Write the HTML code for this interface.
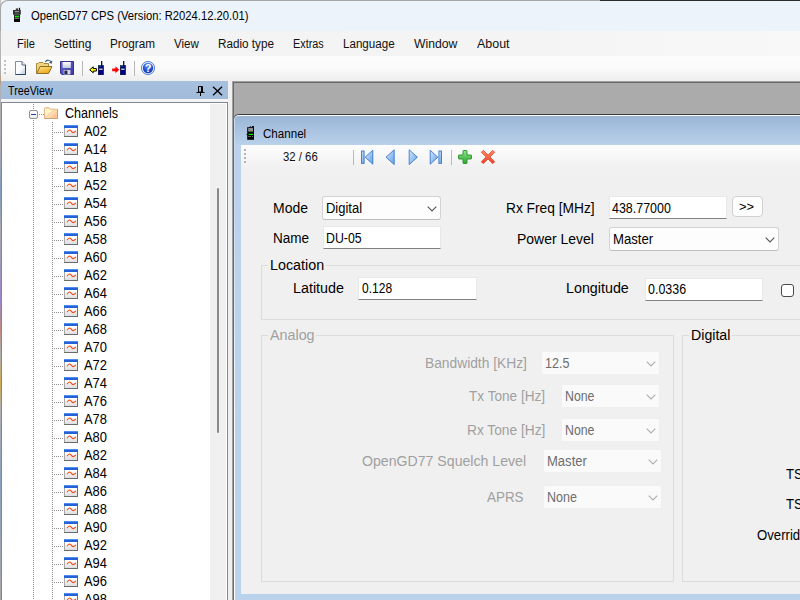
<!DOCTYPE html><html><head><meta charset="utf-8"><title>OpenGD77 CPS</title><style>
*{box-sizing:border-box;margin:0;padding:0}
html,body{width:800px;height:600px;overflow:hidden;background:#f0f0f0}
body{position:relative;font-family:"Liberation Sans",sans-serif;color:#000}
.a{position:absolute}
.t{position:absolute;white-space:nowrap;line-height:20px;height:20px;transform-origin:0 0;font-family:"Liberation Sans",sans-serif}
.tb{position:absolute;background:#fff;border:1px solid #e8e8e8;border-bottom:1px solid #828282;border-radius:1px}
.cb{position:absolute;background:#fdfdfd;border:1px solid #d2d2d2;border-bottom-color:#bdbdbd;border-radius:3px}
.cb.d{background:#fafafa;border-color:#efefef;border-radius:2px}
.gb{position:absolute;border:1px solid #dcdcdc}
.m{position:absolute;background:#f0f0f0}
</style></head><body>
<div class="a" style="left:0;top:0;width:1px;height:600px;background:linear-gradient(#c4c4c4 0,#b0b0b0 12%,#b89a78 13.5%,#b0b0b0 14.5%,#a9a9b4 25%,#7f9ac0 32%,#a9a9b0 38%,#9a86c8 50%,#c08a80 55%,#b0b0b0 59%,#d0a850 64%,#b0b0b0 68%,#8aa0c0 80%,#a8a8a8 100%)"></div>
<div class="a" style="left:0;top:0;width:800px;height:31px;background:#ecf3fa;border-top:1px solid #a6a6a6;border-left:1px solid #a6a6a6;border-top-left-radius:8px"></div>
<div class="a" style="left:600px;top:0;width:200px;height:1px;background:#2a2a2a"></div>
<svg class="a" style="left:12px;top:7px" width="10" height="16" viewBox="0 0 10 16">
<rect x="3.8" y="1.4" width="2.2" height="2" fill="#3a3a3a"/><rect x="6.8" y="0.8" width="1.3" height="2.6" fill="#111"/>
<rect x="1" y="3" width="7.8" height="4.7" fill="#303030"/><rect x="2.8" y="4.2" width="4.2" height="0.8" fill="#b4b4b4"/><rect x="2.8" y="5.8" width="4.2" height="0.8" fill="#686868"/>
<rect x="2" y="7.6" width="6" height="7.2" fill="#1c1c1c"/><rect x="2.8" y="8.7" width="4.2" height="1.5" fill="#00ee00"/>
<rect x="2.8" y="10.8" width="4.2" height="0.8" fill="#9a9a9a"/><rect x="2" y="12" width="6" height="2.8" fill="#000"/>
</svg>
<div class="a" style="left:1px;top:31px;width:799px;height:25px;background:linear-gradient(90deg,#f3f3f3,#f4f4f4 65%,#f8f8f8)"></div>
<div class="a" style="left:1px;top:56px;width:799px;height:25px;background:linear-gradient(#fcfcfc,#fafafa 50%,#eeeeee)"></div>
<div class="a" style="left:4px;top:60px;width:2px;height:15px;background:repeating-linear-gradient(#c2c2c2 0 2px,transparent 2px 4px)"></div>
<svg class="a" style="left:14px;top:60px" width="13" height="16" viewBox="0 0 13 16"><defs><linearGradient id="gn" x1="0" y1="0" x2="1" y2="1"><stop offset="0" stop-color="#fff"/><stop offset="0.55" stop-color="#fbfcff"/><stop offset="1" stop-color="#b4c2dc"/></linearGradient></defs>
<path d="M1.5 1.5 H8 L11.5 5 V14.5 H1.5 Z" fill="url(#gn)" stroke="#7c8cae" stroke-width="1"/><path d="M8 1.5 V5 H11.5" fill="#eef1f8" stroke="#54688f" stroke-width="1"/><path d="M11.5 5 V14.5 H1.5" fill="none" stroke="#2a4472" stroke-width="1"/></svg>
<svg class="a" style="left:36px;top:59px" width="17" height="16" viewBox="0 0 17 16"><defs><linearGradient id="gf" x1="0" y1="0" x2="0.6" y2="1"><stop offset="0" stop-color="#fde48a"/><stop offset="1" stop-color="#f0a818"/></linearGradient></defs>
<path d="M0.5 14.5 V4.5 H2 L3 3.5 H7 L8 4.5 H12.5 V7.5" fill="#f2d27a" stroke="#a8863a" stroke-width="1"/>
<path d="M0.8 14.5 L4 7.5 H16 L12.5 14.5 Z" fill="url(#gf)" stroke="#8a6e30" stroke-width="1"/>
<path d="M9.3 3 C10.5 0.6 14 0.4 15.4 3.4" fill="none" stroke="#3f5f8e" stroke-width="1.1"/><path d="M16.4 1.6 L15.8 4.8 L12.8 3.8 Z" fill="#3f5f8e"/></svg>
<svg class="a" style="left:60px;top:61px" width="14" height="14" viewBox="0 0 14 14"><defs><linearGradient id="gs" x1="0" y1="0" x2="1" y2="1"><stop offset="0" stop-color="#6a68d8"/><stop offset="1" stop-color="#3c3a9c"/></linearGradient><linearGradient id="gs2" x1="0" y1="0" x2="0" y2="1"><stop offset="0" stop-color="#ffffff"/><stop offset="1" stop-color="#c4c8dc"/></linearGradient></defs>
<path d="M0.5 0.5 H13.5 V13.5 H1.8 L0.5 12.2 Z" fill="url(#gs)" stroke="#34328c" stroke-width="1"/>
<rect x="2.6" y="1" width="8.2" height="6" fill="url(#gs2)"/>
<rect x="3.6" y="9" width="6.8" height="4.5" fill="#d6d8e6"/><rect x="4.4" y="9.6" width="3" height="3.6" fill="#26264a"/></svg>
<div class="a" style="left:82px;top:61px;width:1px;height:15px;background:#b9b9b9"></div>
<svg class="a" style="left:88.6px;top:66px" width="8" height="8" viewBox="0 0 8 8"><path d="M7.4 2.5 H4.2 V0.8 L0.7 3.8 L4.2 6.8 V5.1 H7.4 Z" fill="#ffff00" stroke="#000" stroke-width="1"/></svg>
<svg class="a" style="left:97.6px;top:61px" width="7" height="14" viewBox="0 0 7 14"><rect x="3.1" y="0" width="1.2" height="5" fill="#000"/><rect x="0.3" y="4.6" width="5.2" height="9.2" fill="#000084" stroke="#00002a" stroke-width="0.6"/><rect x="0.3" y="4.2" width="2.8" height="1.3" fill="#0a6e6e"/><rect x="1.2" y="7.5" width="3.4" height="1.5" fill="#c0c0c0"/></svg>
<svg class="a" style="left:111.6px;top:66px" width="8" height="8" viewBox="0 0 8 8"><path d="M0.2 2.4 H3.4 V0.3 L7.2 3.8 L3.4 7.3 V5.2 H0.2 Z" fill="#ff0000"/></svg>
<svg class="a" style="left:120.4px;top:61px" width="7" height="14" viewBox="0 0 7 14"><rect x="3.1" y="0" width="1.2" height="5" fill="#000"/><rect x="0.3" y="4.6" width="5.2" height="9.2" fill="#000084" stroke="#00002a" stroke-width="0.6"/><rect x="0.3" y="4.2" width="2.8" height="1.3" fill="#0a6e6e"/><rect x="1.2" y="7.5" width="3.4" height="1.5" fill="#c0c0c0"/></svg>
<div class="a" style="left:134px;top:61px;width:1px;height:15px;background:#b9b9b9"></div>
<svg class="a" style="left:141px;top:60.8px" width="14" height="14" viewBox="0 0 14 14"><defs><radialGradient id="gh" cx="0.5" cy="0.25" r="0.85"><stop offset="0" stop-color="#6a9af4"/><stop offset="0.6" stop-color="#1f4fd0"/><stop offset="1" stop-color="#0a2ea8"/></radialGradient></defs>
<circle cx="7" cy="7" r="6.6" fill="#e6eefc" stroke="#3a66cf" stroke-width="0.8"/><circle cx="7" cy="7" r="5.2" fill="url(#gh)"/>
<text x="7" y="10.9" text-anchor="middle" font-family="Liberation Sans, sans-serif" font-weight="bold" font-size="11" fill="#fff">?</text></svg>
<div class="a" style="left:1px;top:81px;width:227px;height:18px;background:linear-gradient(#a7c0de,#a1bbda)"></div>
<svg class="a" style="left:196px;top:85px" width="9" height="12" viewBox="0 0 9 12"><path d="M2.5 1.5 H6.5 V7 H2.5 Z M5.5 1.5 V7 M0.5 7.5 H8.5 M4.5 8 V11" fill="none" stroke="#000" stroke-width="1"/></svg>
<svg class="a" style="left:212px;top:86px" width="11" height="10" viewBox="0 0 11 10"><path d="M1 0.8 L10 9.3 M10 0.8 L1 9.3" stroke="#000" stroke-width="1.3" fill="none"/></svg>
<div class="a" style="left:1px;top:99px;width:231px;height:3px;background:#f4f4f4"></div>
<div class="a" style="left:228px;top:81px;width:4px;height:519px;background:#f0f0f0"></div>
<div class="a" style="left:1px;top:102px;width:227px;height:499px;background:#fff;border:1px solid #828790"></div>
<div class="a" style="left:210px;top:104px;width:16px;height:497px;background:#f0f0f0"></div>
<div class="a" style="left:217px;top:188px;width:2px;height:245px;background:#8a8a8a;border-radius:1px"></div>
<div class="a" style="left:33px;top:104px;width:1px;height:496px;background:repeating-linear-gradient(#909090 0 1px,transparent 1px 2px)"></div>
<div class="a" style="left:52px;top:122px;width:1px;height:478px;background:repeating-linear-gradient(#909090 0 1px,transparent 1px 2px)"></div>
<div class="a" style="left:39px;top:114px;width:6px;height:1px;background:repeating-linear-gradient(90deg,#909090 0 1px,transparent 1px 2px)"></div>
<div class="a" style="left:29px;top:110px;width:9px;height:9px;background:linear-gradient(#fff,#ececec);border:1px solid #919191;border-radius:2px"></div>
<div class="a" style="left:31px;top:114px;width:5px;height:1px;background:#2a3fa0"></div>
<svg class="a" style="left:44px;top:107px" width="14" height="12" viewBox="0 0 14 12"><defs><linearGradient id="gfo" x1="0" y1="0" x2="1" y2="1"><stop offset="0" stop-color="#fffdd4"/><stop offset="0.42" stop-color="#fff6b8"/><stop offset="0.5" stop-color="#fbc4c8"/><stop offset="0.58" stop-color="#fde9a0"/><stop offset="0.7" stop-color="#fdc8a0"/><stop offset="1" stop-color="#fbc294"/></linearGradient></defs>
<path d="M0.5 11.5 V1.6 L1.4 0.5 H5 L6 2.2 H13.5 V11.5 Z" fill="url(#gfo)" stroke="#e6b486" stroke-width="1"/><path d="M13.5 2.5 V11.5 H0.5" fill="none" stroke="#c9a27a" stroke-width="1"/><path d="M1 1.2 H5" stroke="#fdd4a4" stroke-width="1.4"/></svg>
<svg class="a" width="0" height="0"><defs><linearGradient id="gi" x1="0" y1="0" x2="0" y2="1"><stop offset="0.3" stop-color="#ffffff"/><stop offset="1" stop-color="#dcdcdc"/></linearGradient></defs></svg>
<div class="a" style="left:54px;top:132px;width:10px;height:1px;background:repeating-linear-gradient(90deg,#909090 0 1px,transparent 1px 2px)"></div>
<svg class="a" style="left:64px;top:125px" width="14" height="12" viewBox="0 0 14 12"><rect x="0.5" y="0.5" width="13" height="11" fill="url(#gi)" stroke="#a8a8a8" stroke-width="1"/><path d="M13.5 3 V11.5 M0 11.5 H14" fill="none" stroke="#6c6c6c" stroke-width="1"/><rect x="0" y="0" width="14" height="3" fill="#2463d6"/><rect x="0" y="0" width="14" height="1" fill="#4c8ef4"/><path d="M3 7.3 C4 5.6 5 4.6 6.2 5.2 S8 8 9.4 7.7 S11 6.4 12 6" fill="none" stroke="#f04a1a" stroke-width="1.1"/></svg>
<div class="a" style="left:54px;top:150px;width:10px;height:1px;background:repeating-linear-gradient(90deg,#909090 0 1px,transparent 1px 2px)"></div>
<svg class="a" style="left:64px;top:143px" width="14" height="12" viewBox="0 0 14 12"><rect x="0.5" y="0.5" width="13" height="11" fill="url(#gi)" stroke="#a8a8a8" stroke-width="1"/><path d="M13.5 3 V11.5 M0 11.5 H14" fill="none" stroke="#6c6c6c" stroke-width="1"/><rect x="0" y="0" width="14" height="3" fill="#2463d6"/><rect x="0" y="0" width="14" height="1" fill="#4c8ef4"/><path d="M3 7.3 C4 5.6 5 4.6 6.2 5.2 S8 8 9.4 7.7 S11 6.4 12 6" fill="none" stroke="#f04a1a" stroke-width="1.1"/></svg>
<div class="a" style="left:54px;top:168px;width:10px;height:1px;background:repeating-linear-gradient(90deg,#909090 0 1px,transparent 1px 2px)"></div>
<svg class="a" style="left:64px;top:161px" width="14" height="12" viewBox="0 0 14 12"><rect x="0.5" y="0.5" width="13" height="11" fill="url(#gi)" stroke="#a8a8a8" stroke-width="1"/><path d="M13.5 3 V11.5 M0 11.5 H14" fill="none" stroke="#6c6c6c" stroke-width="1"/><rect x="0" y="0" width="14" height="3" fill="#2463d6"/><rect x="0" y="0" width="14" height="1" fill="#4c8ef4"/><path d="M3 7.3 C4 5.6 5 4.6 6.2 5.2 S8 8 9.4 7.7 S11 6.4 12 6" fill="none" stroke="#f04a1a" stroke-width="1.1"/></svg>
<div class="a" style="left:54px;top:186px;width:10px;height:1px;background:repeating-linear-gradient(90deg,#909090 0 1px,transparent 1px 2px)"></div>
<svg class="a" style="left:64px;top:179px" width="14" height="12" viewBox="0 0 14 12"><rect x="0.5" y="0.5" width="13" height="11" fill="url(#gi)" stroke="#a8a8a8" stroke-width="1"/><path d="M13.5 3 V11.5 M0 11.5 H14" fill="none" stroke="#6c6c6c" stroke-width="1"/><rect x="0" y="0" width="14" height="3" fill="#2463d6"/><rect x="0" y="0" width="14" height="1" fill="#4c8ef4"/><path d="M3 7.3 C4 5.6 5 4.6 6.2 5.2 S8 8 9.4 7.7 S11 6.4 12 6" fill="none" stroke="#f04a1a" stroke-width="1.1"/></svg>
<div class="a" style="left:54px;top:204px;width:10px;height:1px;background:repeating-linear-gradient(90deg,#909090 0 1px,transparent 1px 2px)"></div>
<svg class="a" style="left:64px;top:197px" width="14" height="12" viewBox="0 0 14 12"><rect x="0.5" y="0.5" width="13" height="11" fill="url(#gi)" stroke="#a8a8a8" stroke-width="1"/><path d="M13.5 3 V11.5 M0 11.5 H14" fill="none" stroke="#6c6c6c" stroke-width="1"/><rect x="0" y="0" width="14" height="3" fill="#2463d6"/><rect x="0" y="0" width="14" height="1" fill="#4c8ef4"/><path d="M3 7.3 C4 5.6 5 4.6 6.2 5.2 S8 8 9.4 7.7 S11 6.4 12 6" fill="none" stroke="#f04a1a" stroke-width="1.1"/></svg>
<div class="a" style="left:54px;top:222px;width:10px;height:1px;background:repeating-linear-gradient(90deg,#909090 0 1px,transparent 1px 2px)"></div>
<svg class="a" style="left:64px;top:215px" width="14" height="12" viewBox="0 0 14 12"><rect x="0.5" y="0.5" width="13" height="11" fill="url(#gi)" stroke="#a8a8a8" stroke-width="1"/><path d="M13.5 3 V11.5 M0 11.5 H14" fill="none" stroke="#6c6c6c" stroke-width="1"/><rect x="0" y="0" width="14" height="3" fill="#2463d6"/><rect x="0" y="0" width="14" height="1" fill="#4c8ef4"/><path d="M3 7.3 C4 5.6 5 4.6 6.2 5.2 S8 8 9.4 7.7 S11 6.4 12 6" fill="none" stroke="#f04a1a" stroke-width="1.1"/></svg>
<div class="a" style="left:54px;top:240px;width:10px;height:1px;background:repeating-linear-gradient(90deg,#909090 0 1px,transparent 1px 2px)"></div>
<svg class="a" style="left:64px;top:233px" width="14" height="12" viewBox="0 0 14 12"><rect x="0.5" y="0.5" width="13" height="11" fill="url(#gi)" stroke="#a8a8a8" stroke-width="1"/><path d="M13.5 3 V11.5 M0 11.5 H14" fill="none" stroke="#6c6c6c" stroke-width="1"/><rect x="0" y="0" width="14" height="3" fill="#2463d6"/><rect x="0" y="0" width="14" height="1" fill="#4c8ef4"/><path d="M3 7.3 C4 5.6 5 4.6 6.2 5.2 S8 8 9.4 7.7 S11 6.4 12 6" fill="none" stroke="#f04a1a" stroke-width="1.1"/></svg>
<div class="a" style="left:54px;top:258px;width:10px;height:1px;background:repeating-linear-gradient(90deg,#909090 0 1px,transparent 1px 2px)"></div>
<svg class="a" style="left:64px;top:251px" width="14" height="12" viewBox="0 0 14 12"><rect x="0.5" y="0.5" width="13" height="11" fill="url(#gi)" stroke="#a8a8a8" stroke-width="1"/><path d="M13.5 3 V11.5 M0 11.5 H14" fill="none" stroke="#6c6c6c" stroke-width="1"/><rect x="0" y="0" width="14" height="3" fill="#2463d6"/><rect x="0" y="0" width="14" height="1" fill="#4c8ef4"/><path d="M3 7.3 C4 5.6 5 4.6 6.2 5.2 S8 8 9.4 7.7 S11 6.4 12 6" fill="none" stroke="#f04a1a" stroke-width="1.1"/></svg>
<div class="a" style="left:54px;top:276px;width:10px;height:1px;background:repeating-linear-gradient(90deg,#909090 0 1px,transparent 1px 2px)"></div>
<svg class="a" style="left:64px;top:269px" width="14" height="12" viewBox="0 0 14 12"><rect x="0.5" y="0.5" width="13" height="11" fill="url(#gi)" stroke="#a8a8a8" stroke-width="1"/><path d="M13.5 3 V11.5 M0 11.5 H14" fill="none" stroke="#6c6c6c" stroke-width="1"/><rect x="0" y="0" width="14" height="3" fill="#2463d6"/><rect x="0" y="0" width="14" height="1" fill="#4c8ef4"/><path d="M3 7.3 C4 5.6 5 4.6 6.2 5.2 S8 8 9.4 7.7 S11 6.4 12 6" fill="none" stroke="#f04a1a" stroke-width="1.1"/></svg>
<div class="a" style="left:54px;top:294px;width:10px;height:1px;background:repeating-linear-gradient(90deg,#909090 0 1px,transparent 1px 2px)"></div>
<svg class="a" style="left:64px;top:287px" width="14" height="12" viewBox="0 0 14 12"><rect x="0.5" y="0.5" width="13" height="11" fill="url(#gi)" stroke="#a8a8a8" stroke-width="1"/><path d="M13.5 3 V11.5 M0 11.5 H14" fill="none" stroke="#6c6c6c" stroke-width="1"/><rect x="0" y="0" width="14" height="3" fill="#2463d6"/><rect x="0" y="0" width="14" height="1" fill="#4c8ef4"/><path d="M3 7.3 C4 5.6 5 4.6 6.2 5.2 S8 8 9.4 7.7 S11 6.4 12 6" fill="none" stroke="#f04a1a" stroke-width="1.1"/></svg>
<div class="a" style="left:54px;top:312px;width:10px;height:1px;background:repeating-linear-gradient(90deg,#909090 0 1px,transparent 1px 2px)"></div>
<svg class="a" style="left:64px;top:305px" width="14" height="12" viewBox="0 0 14 12"><rect x="0.5" y="0.5" width="13" height="11" fill="url(#gi)" stroke="#a8a8a8" stroke-width="1"/><path d="M13.5 3 V11.5 M0 11.5 H14" fill="none" stroke="#6c6c6c" stroke-width="1"/><rect x="0" y="0" width="14" height="3" fill="#2463d6"/><rect x="0" y="0" width="14" height="1" fill="#4c8ef4"/><path d="M3 7.3 C4 5.6 5 4.6 6.2 5.2 S8 8 9.4 7.7 S11 6.4 12 6" fill="none" stroke="#f04a1a" stroke-width="1.1"/></svg>
<div class="a" style="left:54px;top:330px;width:10px;height:1px;background:repeating-linear-gradient(90deg,#909090 0 1px,transparent 1px 2px)"></div>
<svg class="a" style="left:64px;top:323px" width="14" height="12" viewBox="0 0 14 12"><rect x="0.5" y="0.5" width="13" height="11" fill="url(#gi)" stroke="#a8a8a8" stroke-width="1"/><path d="M13.5 3 V11.5 M0 11.5 H14" fill="none" stroke="#6c6c6c" stroke-width="1"/><rect x="0" y="0" width="14" height="3" fill="#2463d6"/><rect x="0" y="0" width="14" height="1" fill="#4c8ef4"/><path d="M3 7.3 C4 5.6 5 4.6 6.2 5.2 S8 8 9.4 7.7 S11 6.4 12 6" fill="none" stroke="#f04a1a" stroke-width="1.1"/></svg>
<div class="a" style="left:54px;top:348px;width:10px;height:1px;background:repeating-linear-gradient(90deg,#909090 0 1px,transparent 1px 2px)"></div>
<svg class="a" style="left:64px;top:341px" width="14" height="12" viewBox="0 0 14 12"><rect x="0.5" y="0.5" width="13" height="11" fill="url(#gi)" stroke="#a8a8a8" stroke-width="1"/><path d="M13.5 3 V11.5 M0 11.5 H14" fill="none" stroke="#6c6c6c" stroke-width="1"/><rect x="0" y="0" width="14" height="3" fill="#2463d6"/><rect x="0" y="0" width="14" height="1" fill="#4c8ef4"/><path d="M3 7.3 C4 5.6 5 4.6 6.2 5.2 S8 8 9.4 7.7 S11 6.4 12 6" fill="none" stroke="#f04a1a" stroke-width="1.1"/></svg>
<div class="a" style="left:54px;top:366px;width:10px;height:1px;background:repeating-linear-gradient(90deg,#909090 0 1px,transparent 1px 2px)"></div>
<svg class="a" style="left:64px;top:359px" width="14" height="12" viewBox="0 0 14 12"><rect x="0.5" y="0.5" width="13" height="11" fill="url(#gi)" stroke="#a8a8a8" stroke-width="1"/><path d="M13.5 3 V11.5 M0 11.5 H14" fill="none" stroke="#6c6c6c" stroke-width="1"/><rect x="0" y="0" width="14" height="3" fill="#2463d6"/><rect x="0" y="0" width="14" height="1" fill="#4c8ef4"/><path d="M3 7.3 C4 5.6 5 4.6 6.2 5.2 S8 8 9.4 7.7 S11 6.4 12 6" fill="none" stroke="#f04a1a" stroke-width="1.1"/></svg>
<div class="a" style="left:54px;top:384px;width:10px;height:1px;background:repeating-linear-gradient(90deg,#909090 0 1px,transparent 1px 2px)"></div>
<svg class="a" style="left:64px;top:377px" width="14" height="12" viewBox="0 0 14 12"><rect x="0.5" y="0.5" width="13" height="11" fill="url(#gi)" stroke="#a8a8a8" stroke-width="1"/><path d="M13.5 3 V11.5 M0 11.5 H14" fill="none" stroke="#6c6c6c" stroke-width="1"/><rect x="0" y="0" width="14" height="3" fill="#2463d6"/><rect x="0" y="0" width="14" height="1" fill="#4c8ef4"/><path d="M3 7.3 C4 5.6 5 4.6 6.2 5.2 S8 8 9.4 7.7 S11 6.4 12 6" fill="none" stroke="#f04a1a" stroke-width="1.1"/></svg>
<div class="a" style="left:54px;top:402px;width:10px;height:1px;background:repeating-linear-gradient(90deg,#909090 0 1px,transparent 1px 2px)"></div>
<svg class="a" style="left:64px;top:395px" width="14" height="12" viewBox="0 0 14 12"><rect x="0.5" y="0.5" width="13" height="11" fill="url(#gi)" stroke="#a8a8a8" stroke-width="1"/><path d="M13.5 3 V11.5 M0 11.5 H14" fill="none" stroke="#6c6c6c" stroke-width="1"/><rect x="0" y="0" width="14" height="3" fill="#2463d6"/><rect x="0" y="0" width="14" height="1" fill="#4c8ef4"/><path d="M3 7.3 C4 5.6 5 4.6 6.2 5.2 S8 8 9.4 7.7 S11 6.4 12 6" fill="none" stroke="#f04a1a" stroke-width="1.1"/></svg>
<div class="a" style="left:54px;top:420px;width:10px;height:1px;background:repeating-linear-gradient(90deg,#909090 0 1px,transparent 1px 2px)"></div>
<svg class="a" style="left:64px;top:413px" width="14" height="12" viewBox="0 0 14 12"><rect x="0.5" y="0.5" width="13" height="11" fill="url(#gi)" stroke="#a8a8a8" stroke-width="1"/><path d="M13.5 3 V11.5 M0 11.5 H14" fill="none" stroke="#6c6c6c" stroke-width="1"/><rect x="0" y="0" width="14" height="3" fill="#2463d6"/><rect x="0" y="0" width="14" height="1" fill="#4c8ef4"/><path d="M3 7.3 C4 5.6 5 4.6 6.2 5.2 S8 8 9.4 7.7 S11 6.4 12 6" fill="none" stroke="#f04a1a" stroke-width="1.1"/></svg>
<div class="a" style="left:54px;top:438px;width:10px;height:1px;background:repeating-linear-gradient(90deg,#909090 0 1px,transparent 1px 2px)"></div>
<svg class="a" style="left:64px;top:431px" width="14" height="12" viewBox="0 0 14 12"><rect x="0.5" y="0.5" width="13" height="11" fill="url(#gi)" stroke="#a8a8a8" stroke-width="1"/><path d="M13.5 3 V11.5 M0 11.5 H14" fill="none" stroke="#6c6c6c" stroke-width="1"/><rect x="0" y="0" width="14" height="3" fill="#2463d6"/><rect x="0" y="0" width="14" height="1" fill="#4c8ef4"/><path d="M3 7.3 C4 5.6 5 4.6 6.2 5.2 S8 8 9.4 7.7 S11 6.4 12 6" fill="none" stroke="#f04a1a" stroke-width="1.1"/></svg>
<div class="a" style="left:54px;top:456px;width:10px;height:1px;background:repeating-linear-gradient(90deg,#909090 0 1px,transparent 1px 2px)"></div>
<svg class="a" style="left:64px;top:449px" width="14" height="12" viewBox="0 0 14 12"><rect x="0.5" y="0.5" width="13" height="11" fill="url(#gi)" stroke="#a8a8a8" stroke-width="1"/><path d="M13.5 3 V11.5 M0 11.5 H14" fill="none" stroke="#6c6c6c" stroke-width="1"/><rect x="0" y="0" width="14" height="3" fill="#2463d6"/><rect x="0" y="0" width="14" height="1" fill="#4c8ef4"/><path d="M3 7.3 C4 5.6 5 4.6 6.2 5.2 S8 8 9.4 7.7 S11 6.4 12 6" fill="none" stroke="#f04a1a" stroke-width="1.1"/></svg>
<div class="a" style="left:54px;top:474px;width:10px;height:1px;background:repeating-linear-gradient(90deg,#909090 0 1px,transparent 1px 2px)"></div>
<svg class="a" style="left:64px;top:467px" width="14" height="12" viewBox="0 0 14 12"><rect x="0.5" y="0.5" width="13" height="11" fill="url(#gi)" stroke="#a8a8a8" stroke-width="1"/><path d="M13.5 3 V11.5 M0 11.5 H14" fill="none" stroke="#6c6c6c" stroke-width="1"/><rect x="0" y="0" width="14" height="3" fill="#2463d6"/><rect x="0" y="0" width="14" height="1" fill="#4c8ef4"/><path d="M3 7.3 C4 5.6 5 4.6 6.2 5.2 S8 8 9.4 7.7 S11 6.4 12 6" fill="none" stroke="#f04a1a" stroke-width="1.1"/></svg>
<div class="a" style="left:54px;top:492px;width:10px;height:1px;background:repeating-linear-gradient(90deg,#909090 0 1px,transparent 1px 2px)"></div>
<svg class="a" style="left:64px;top:485px" width="14" height="12" viewBox="0 0 14 12"><rect x="0.5" y="0.5" width="13" height="11" fill="url(#gi)" stroke="#a8a8a8" stroke-width="1"/><path d="M13.5 3 V11.5 M0 11.5 H14" fill="none" stroke="#6c6c6c" stroke-width="1"/><rect x="0" y="0" width="14" height="3" fill="#2463d6"/><rect x="0" y="0" width="14" height="1" fill="#4c8ef4"/><path d="M3 7.3 C4 5.6 5 4.6 6.2 5.2 S8 8 9.4 7.7 S11 6.4 12 6" fill="none" stroke="#f04a1a" stroke-width="1.1"/></svg>
<div class="a" style="left:54px;top:510px;width:10px;height:1px;background:repeating-linear-gradient(90deg,#909090 0 1px,transparent 1px 2px)"></div>
<svg class="a" style="left:64px;top:503px" width="14" height="12" viewBox="0 0 14 12"><rect x="0.5" y="0.5" width="13" height="11" fill="url(#gi)" stroke="#a8a8a8" stroke-width="1"/><path d="M13.5 3 V11.5 M0 11.5 H14" fill="none" stroke="#6c6c6c" stroke-width="1"/><rect x="0" y="0" width="14" height="3" fill="#2463d6"/><rect x="0" y="0" width="14" height="1" fill="#4c8ef4"/><path d="M3 7.3 C4 5.6 5 4.6 6.2 5.2 S8 8 9.4 7.7 S11 6.4 12 6" fill="none" stroke="#f04a1a" stroke-width="1.1"/></svg>
<div class="a" style="left:54px;top:528px;width:10px;height:1px;background:repeating-linear-gradient(90deg,#909090 0 1px,transparent 1px 2px)"></div>
<svg class="a" style="left:64px;top:521px" width="14" height="12" viewBox="0 0 14 12"><rect x="0.5" y="0.5" width="13" height="11" fill="url(#gi)" stroke="#a8a8a8" stroke-width="1"/><path d="M13.5 3 V11.5 M0 11.5 H14" fill="none" stroke="#6c6c6c" stroke-width="1"/><rect x="0" y="0" width="14" height="3" fill="#2463d6"/><rect x="0" y="0" width="14" height="1" fill="#4c8ef4"/><path d="M3 7.3 C4 5.6 5 4.6 6.2 5.2 S8 8 9.4 7.7 S11 6.4 12 6" fill="none" stroke="#f04a1a" stroke-width="1.1"/></svg>
<div class="a" style="left:54px;top:546px;width:10px;height:1px;background:repeating-linear-gradient(90deg,#909090 0 1px,transparent 1px 2px)"></div>
<svg class="a" style="left:64px;top:539px" width="14" height="12" viewBox="0 0 14 12"><rect x="0.5" y="0.5" width="13" height="11" fill="url(#gi)" stroke="#a8a8a8" stroke-width="1"/><path d="M13.5 3 V11.5 M0 11.5 H14" fill="none" stroke="#6c6c6c" stroke-width="1"/><rect x="0" y="0" width="14" height="3" fill="#2463d6"/><rect x="0" y="0" width="14" height="1" fill="#4c8ef4"/><path d="M3 7.3 C4 5.6 5 4.6 6.2 5.2 S8 8 9.4 7.7 S11 6.4 12 6" fill="none" stroke="#f04a1a" stroke-width="1.1"/></svg>
<div class="a" style="left:54px;top:564px;width:10px;height:1px;background:repeating-linear-gradient(90deg,#909090 0 1px,transparent 1px 2px)"></div>
<svg class="a" style="left:64px;top:557px" width="14" height="12" viewBox="0 0 14 12"><rect x="0.5" y="0.5" width="13" height="11" fill="url(#gi)" stroke="#a8a8a8" stroke-width="1"/><path d="M13.5 3 V11.5 M0 11.5 H14" fill="none" stroke="#6c6c6c" stroke-width="1"/><rect x="0" y="0" width="14" height="3" fill="#2463d6"/><rect x="0" y="0" width="14" height="1" fill="#4c8ef4"/><path d="M3 7.3 C4 5.6 5 4.6 6.2 5.2 S8 8 9.4 7.7 S11 6.4 12 6" fill="none" stroke="#f04a1a" stroke-width="1.1"/></svg>
<div class="a" style="left:54px;top:582px;width:10px;height:1px;background:repeating-linear-gradient(90deg,#909090 0 1px,transparent 1px 2px)"></div>
<svg class="a" style="left:64px;top:575px" width="14" height="12" viewBox="0 0 14 12"><rect x="0.5" y="0.5" width="13" height="11" fill="url(#gi)" stroke="#a8a8a8" stroke-width="1"/><path d="M13.5 3 V11.5 M0 11.5 H14" fill="none" stroke="#6c6c6c" stroke-width="1"/><rect x="0" y="0" width="14" height="3" fill="#2463d6"/><rect x="0" y="0" width="14" height="1" fill="#4c8ef4"/><path d="M3 7.3 C4 5.6 5 4.6 6.2 5.2 S8 8 9.4 7.7 S11 6.4 12 6" fill="none" stroke="#f04a1a" stroke-width="1.1"/></svg>
<div class="a" style="left:54px;top:600px;width:10px;height:1px;background:repeating-linear-gradient(90deg,#909090 0 1px,transparent 1px 2px)"></div>
<svg class="a" style="left:64px;top:593px" width="14" height="12" viewBox="0 0 14 12"><rect x="0.5" y="0.5" width="13" height="11" fill="url(#gi)" stroke="#a8a8a8" stroke-width="1"/><path d="M13.5 3 V11.5 M0 11.5 H14" fill="none" stroke="#6c6c6c" stroke-width="1"/><rect x="0" y="0" width="14" height="3" fill="#2463d6"/><rect x="0" y="0" width="14" height="1" fill="#4c8ef4"/><path d="M3 7.3 C4 5.6 5 4.6 6.2 5.2 S8 8 9.4 7.7 S11 6.4 12 6" fill="none" stroke="#f04a1a" stroke-width="1.1"/></svg>
<div class="a" style="left:232px;top:81px;width:568px;height:519px;background:#a0a0a0"></div>
<div class="a" style="left:233px;top:82px;width:567px;height:518px;background:#696969"></div>
<div class="a" style="left:234px;top:83px;width:566px;height:517px;background:#ababab"></div>
<div class="a" style="left:233px;top:114px;width:580px;height:500px;background:#bad2eb;border:1px solid #696969;border-top-color:#3c3c3c;border-top-left-radius:6px"></div>
<div class="a" style="left:234px;top:115px;width:580px;height:500px;border-top:1px solid #f4f8fc;border-left:1px solid #c4d8ee;border-top-left-radius:5px"></div>
<div class="a" style="left:234px;top:180px;width:1px;height:420px;background:linear-gradient(rgba(255,255,255,0),rgba(255,255,255,0.95) 60%,#fff)"></div>
<div class="a" style="left:235px;top:116px;width:580px;height:29px;background:linear-gradient(#9ab5d6,#b9d1ea);border-top-left-radius:4px"></div>
<svg class="a" style="left:246px;top:126px" width="9" height="14" viewBox="0 0 9 14">
<rect x="1.2" y="1.2" width="6.8" height="12.6" fill="#000"/><path d="M3.4 1.3 L4.3 0 L5.2 1.3 Z" fill="#000"/><rect x="5.8" y="0.1" width="2.2" height="1.4" fill="#000"/>
<rect x="2.2" y="2" width="4.8" height="3.6" fill="#8e8e8e"/><rect x="0.5" y="8" width="1" height="1" fill="#000"/>
<rect x="2.6" y="7.8" width="4.4" height="1.2" fill="#00e800"/><rect x="2.2" y="10.2" width="2.6" height="0.8" fill="#8a8a8a"/><rect x="6" y="10.2" width="1" height="0.8" fill="#8a8a8a"/>
</svg>
<div class="a" style="left:241px;top:145px;width:559px;height:25px;background:linear-gradient(#fdfdfd,#f0f0f0)"></div>
<div class="a" style="left:244px;top:149px;width:2px;height:15px;background:repeating-linear-gradient(#b4b4b4 0 2px,transparent 2px 4px)"></div>
<div class="a" style="left:353px;top:150px;width:1px;height:15px;background:#b9b9b9"></div>
<svg class="a" style="left:360px;top:150px" width="15" height="15" viewBox="0 0 15 15"><defs><linearGradient id="gb" x1="0" y1="0" x2="1" y2="1"><stop offset="0" stop-color="#d8e9fc"/><stop offset="1" stop-color="#5f9fe8"/></linearGradient>
<linearGradient id="gg" x1="0" y1="0" x2="0" y2="1"><stop offset="0" stop-color="#8fe88f"/><stop offset="1" stop-color="#2fa12f"/></linearGradient>
<linearGradient id="gr" x1="0" y1="0" x2="0" y2="1"><stop offset="0" stop-color="#ff8a6a"/><stop offset="1" stop-color="#e8432a"/></linearGradient></defs><rect x="1.5" y="1" width="2.6" height="12.4" fill="url(#gb)" stroke="#3b78c8" stroke-width="0.9"/><path d="M12.8 0.2 L5.2 7.2 L12.8 14.2 Z" fill="url(#gb)" stroke="#3b78c8" stroke-width="0.9"/></svg>
<svg class="a" style="left:385px;top:150px" width="11" height="15" viewBox="0 0 11 15" overflow="visible"><path d="M9.2 -0.2 L1 7.2 L9.2 14.6 Z" fill="url(#gb)" stroke="#3b78c8" stroke-width="0.9"/></svg>
<svg class="a" style="left:408px;top:150px" width="11" height="15" viewBox="0 0 11 15" overflow="visible"><path d="M1.2 -0.2 L9.4 7.2 L1.2 14.6 Z" fill="url(#gb)" stroke="#3b78c8" stroke-width="0.9"/></svg>
<svg class="a" style="left:429px;top:150px" width="15" height="15" viewBox="0 0 15 15"><rect x="9.9" y="1" width="2.6" height="12.4" fill="url(#gb)" stroke="#3b78c8" stroke-width="0.9"/><path d="M1.2 0.2 L8.8 7.2 L1.2 14.2 Z" fill="url(#gb)" stroke="#3b78c8" stroke-width="0.9"/></svg>
<div class="a" style="left:451px;top:150px;width:1px;height:15px;background:#b9b9b9"></div>
<svg class="a" style="left:457px;top:149px" width="16" height="16" viewBox="0 0 16 16"><path d="M6.5 1.5 H9.5 Q10 1.5 10 2 V6 H14 Q14.5 6 14.5 6.5 V9.5 Q14.5 10 14 10 H10 V14 Q10 14.5 9.5 14.5 H6.5 Q6 14.5 6 14 V10 H2 Q1.5 10 1.5 9.5 V6.5 Q1.5 6 2 6 H6 V2 Q6 1.5 6.5 1.5 Z" fill="url(#gg)" stroke="#2f9a2f" stroke-width="1"/></svg>
<svg class="a" style="left:480px;top:149px" width="16" height="16" viewBox="0 0 16 16"><path d="M3.3 1.3 L8 6 L12.7 1.3 L14.7 3.3 L10 8 L14.7 12.7 L12.7 14.7 L8 10 L3.3 14.7 L1.3 12.7 L6 8 L1.3 3.3 Z" fill="url(#gr)" stroke="#e2472c" stroke-width="0.8" stroke-linejoin="round"/></svg>
<div class="a" style="left:241px;top:170px;width:559px;height:424px;background:#f0f0f0"></div>
<div class="cb" style="left:322px;top:196px;width:119px;height:24px"></div>
<svg class="a" style="left:427px;top:206px" width="10" height="6" viewBox="0 0 10 6"><path d="M0.7 0.6 L5 4.9 L9.3 0.6" fill="none" stroke="#555" stroke-width="1.1"/></svg>
<div class="tb" style="left:323px;top:226px;width:118px;height:23px"></div>
<div class="tb" style="left:609px;top:196px;width:118px;height:23px"></div>
<div class="a" style="left:732px;top:196px;width:31px;height:21px;background:#fdfdfd;border:1px solid #d0d0d0;border-radius:4px"></div>
<div class="cb" style="left:609px;top:227px;width:170px;height:24px"></div>
<svg class="a" style="left:765px;top:237px" width="10" height="6" viewBox="0 0 10 6"><path d="M0.7 0.6 L5 4.9 L9.3 0.6" fill="none" stroke="#555" stroke-width="1.1"/></svg>
<div class="gb" style="left:261px;top:265px;width:560px;height:55px"></div>
<div class="m" style="left:268px;top:260px;width:58px;height:12px"></div>
<div class="tb" style="left:358px;top:277px;width:119px;height:23px"></div>
<div class="tb" style="left:645px;top:278px;width:118px;height:23px"></div>
<div class="a" style="left:781px;top:284px;width:13px;height:13px;background:#fff;border:1px solid #4a4a4a;border-radius:3px"></div>
<div class="gb" style="left:261px;top:335px;width:413px;height:247px"></div>
<div class="m" style="left:268px;top:330px;width:48px;height:12px"></div>
<div class="gb" style="left:682px;top:335px;width:140px;height:247px"></div>
<div class="m" style="left:689px;top:330px;width:43px;height:12px"></div>
<div class="cb d" style="left:541px;top:351px;width:119px;height:24px"></div>
<svg class="a" style="left:646px;top:360.5px" width="10" height="6" viewBox="0 0 10 6"><path d="M0.7 0.6 L5 4.9 L9.3 0.6" fill="none" stroke="#adadad" stroke-width="1.1"/></svg>
<div class="cb d" style="left:561px;top:384px;width:99px;height:24px"></div>
<svg class="a" style="left:646px;top:393.5px" width="10" height="6" viewBox="0 0 10 6"><path d="M0.7 0.6 L5 4.9 L9.3 0.6" fill="none" stroke="#adadad" stroke-width="1.1"/></svg>
<div class="cb d" style="left:561px;top:418px;width:99px;height:24px"></div>
<svg class="a" style="left:646px;top:427.5px" width="10" height="6" viewBox="0 0 10 6"><path d="M0.7 0.6 L5 4.9 L9.3 0.6" fill="none" stroke="#adadad" stroke-width="1.1"/></svg>
<div class="cb d" style="left:543px;top:449px;width:119px;height:24px"></div>
<svg class="a" style="left:648px;top:458.5px" width="10" height="6" viewBox="0 0 10 6"><path d="M0.7 0.6 L5 4.9 L9.3 0.6" fill="none" stroke="#adadad" stroke-width="1.1"/></svg>
<div class="cb d" style="left:543px;top:485px;width:119px;height:24px"></div>
<svg class="a" style="left:648px;top:494.5px" width="10" height="6" viewBox="0 0 10 6"><path d="M0.7 0.6 L5 4.9 L9.3 0.6" fill="none" stroke="#adadad" stroke-width="1.1"/></svg>
<div class="t" style="left:31.10px;top:6.00px;font-size:12px;color:#000;transform:scaleX(0.9365);">OpenGD77 CPS (Version: R2024.12.20.01)</div>
<div class="t" style="left:16.80px;top:34.00px;font-size:12px;color:#111;transform:scaleX(0.9256);">File</div>
<div class="t" style="left:53.80px;top:34.00px;font-size:12px;color:#111;transform:scaleX(1.0004);">Setting</div>
<div class="t" style="left:110.05px;top:34.00px;font-size:12px;color:#111;transform:scaleX(0.9768);">Program</div>
<div class="t" style="left:173.55px;top:34.00px;font-size:12px;color:#111;transform:scaleX(0.9645);">View</div>
<div class="t" style="left:218.05px;top:34.00px;font-size:12px;color:#111;transform:scaleX(0.9741);">Radio type</div>
<div class="t" style="left:293.05px;top:34.00px;font-size:12px;color:#111;transform:scaleX(0.9027);">Extras</div>
<div class="t" style="left:343.05px;top:34.00px;font-size:12px;color:#111;transform:scaleX(0.9671);">Language</div>
<div class="t" style="left:413.80px;top:34.00px;font-size:12px;color:#111;transform:scaleX(1.0160);">Window</div>
<div class="t" style="left:476.80px;top:34.00px;font-size:12px;color:#111;transform:scaleX(1.0367);">About</div>
<div class="t" style="left:7.50px;top:81.00px;font-size:12px;color:#000;transform:scaleX(0.8936);">TreeView</div>
<div class="t" style="left:263.00px;top:124.00px;font-size:12px;color:#000;transform:scaleX(0.9651);">Channel</div>
<div class="t" style="left:283.00px;top:147.00px;font-size:12px;color:#111;transform:scaleX(0.9453);">32 / 66</div>
<div class="t" style="left:65.20px;top:103.00px;font-size:14px;color:#000;transform:scaleX(0.8960);">Channels</div>
<div class="t" style="left:83.70px;top:121.00px;font-size:14px;color:#000;transform:scaleX(0.9234);">A02</div>
<div class="t" style="left:83.70px;top:139.00px;font-size:14px;color:#000;transform:scaleX(0.9234);">A14</div>
<div class="t" style="left:83.70px;top:157.00px;font-size:14px;color:#000;transform:scaleX(0.9234);">A18</div>
<div class="t" style="left:83.70px;top:175.00px;font-size:14px;color:#000;transform:scaleX(0.9234);">A52</div>
<div class="t" style="left:83.70px;top:193.00px;font-size:14px;color:#000;transform:scaleX(0.9234);">A54</div>
<div class="t" style="left:83.70px;top:211.00px;font-size:14px;color:#000;transform:scaleX(0.9234);">A56</div>
<div class="t" style="left:83.70px;top:229.00px;font-size:14px;color:#000;transform:scaleX(0.9234);">A58</div>
<div class="t" style="left:83.70px;top:247.00px;font-size:14px;color:#000;transform:scaleX(0.9234);">A60</div>
<div class="t" style="left:83.70px;top:265.00px;font-size:14px;color:#000;transform:scaleX(0.9234);">A62</div>
<div class="t" style="left:83.70px;top:283.00px;font-size:14px;color:#000;transform:scaleX(0.9234);">A64</div>
<div class="t" style="left:83.70px;top:301.00px;font-size:14px;color:#000;transform:scaleX(0.9234);">A66</div>
<div class="t" style="left:83.70px;top:319.00px;font-size:14px;color:#000;transform:scaleX(0.9234);">A68</div>
<div class="t" style="left:83.70px;top:337.00px;font-size:14px;color:#000;transform:scaleX(0.9234);">A70</div>
<div class="t" style="left:83.70px;top:355.00px;font-size:14px;color:#000;transform:scaleX(0.9234);">A72</div>
<div class="t" style="left:83.70px;top:373.00px;font-size:14px;color:#000;transform:scaleX(0.9234);">A74</div>
<div class="t" style="left:83.70px;top:391.00px;font-size:14px;color:#000;transform:scaleX(0.9234);">A76</div>
<div class="t" style="left:83.70px;top:409.00px;font-size:14px;color:#000;transform:scaleX(0.9234);">A78</div>
<div class="t" style="left:83.70px;top:427.00px;font-size:14px;color:#000;transform:scaleX(0.9234);">A80</div>
<div class="t" style="left:83.70px;top:445.00px;font-size:14px;color:#000;transform:scaleX(0.9234);">A82</div>
<div class="t" style="left:83.70px;top:463.00px;font-size:14px;color:#000;transform:scaleX(0.9234);">A84</div>
<div class="t" style="left:83.70px;top:481.00px;font-size:14px;color:#000;transform:scaleX(0.9234);">A86</div>
<div class="t" style="left:83.70px;top:499.00px;font-size:14px;color:#000;transform:scaleX(0.9234);">A88</div>
<div class="t" style="left:83.70px;top:517.00px;font-size:14px;color:#000;transform:scaleX(0.9234);">A90</div>
<div class="t" style="left:83.70px;top:535.00px;font-size:14px;color:#000;transform:scaleX(0.9234);">A92</div>
<div class="t" style="left:83.70px;top:553.00px;font-size:14px;color:#000;transform:scaleX(0.9234);">A94</div>
<div class="t" style="left:83.70px;top:571.00px;font-size:14px;color:#000;transform:scaleX(0.9234);">A96</div>
<div class="t" style="left:83.70px;top:589.00px;font-size:14px;color:#000;transform:scaleX(0.9234);">A98</div>
<div class="t" style="left:272.60px;top:198.00px;font-size:14px;color:#000;transform:scaleX(0.9990);">Mode</div>
<div class="t" style="left:272.63px;top:228.00px;font-size:14px;color:#000;transform:scaleX(0.9683);">Name</div>
<div class="t" style="left:326.07px;top:198.00px;font-size:14px;color:#000;transform:scaleX(0.9261);">Digital</div>
<div class="t" style="left:326.12px;top:228.00px;font-size:14px;color:#000;transform:scaleX(0.8823);">DU-05</div>
<div class="t" style="left:505.52px;top:198.00px;font-size:14px;color:#000;transform:scaleX(0.9820);">Rx Freq [MHz]</div>
<div class="t" style="left:516.50px;top:229.00px;font-size:14px;color:#000;transform:scaleX(0.9976);">Power Level</div>
<div class="t" style="left:612.00px;top:198.00px;font-size:14px;color:#000;transform:scaleX(0.8887);">438.77000</div>
<div class="t" style="left:613.06px;top:229.00px;font-size:14px;color:#000;transform:scaleX(0.9401);">Master</div>
<div class="t" style="left:738.75px;top:197.00px;font-size:13px;color:#000;transform:scaleX(0.9937);">&gt;&gt;</div>
<div class="t" style="left:270.18px;top:255.00px;font-size:14px;color:#000;transform:scaleX(1.0226);">Location</div>
<div class="t" style="left:292.98px;top:278.00px;font-size:14px;color:#000;transform:scaleX(1.0238);">Latitude</div>
<div class="t" style="left:361.75px;top:278.00px;font-size:14px;color:#000;transform:scaleX(0.8582);">0.128</div>
<div class="t" style="left:565.73px;top:278.00px;font-size:14px;color:#000;transform:scaleX(1.0211);">Longitude</div>
<div class="t" style="left:647.50px;top:279.00px;font-size:14px;color:#000;transform:scaleX(0.8888);">0.0336</div>
<div class="t" style="left:270.00px;top:325.00px;font-size:14px;color:#a0a0a0;transform:scaleX(1.0220);">Analog</div>
<div class="t" style="left:690.74px;top:325.00px;font-size:14px;color:#000;transform:scaleX(1.0121);">Digital</div>
<div class="t" style="left:425.27px;top:353.00px;font-size:14px;color:#a0a0a0;transform:scaleX(0.9842);">Bandwidth [KHz]</div>
<div class="t" style="left:468.75px;top:386.00px;font-size:14px;color:#a0a0a0;transform:scaleX(0.9718);">Tx Tone [Hz]</div>
<div class="t" style="left:466.52px;top:420.00px;font-size:14px;color:#a0a0a0;transform:scaleX(0.9809);">Rx Tone [Hz]</div>
<div class="t" style="left:361.75px;top:451.00px;font-size:14px;color:#a0a0a0;transform:scaleX(1.0089);">OpenGD77 Squelch Level</div>
<div class="t" style="left:487.00px;top:487.00px;font-size:14px;color:#a0a0a0;transform:scaleX(0.9593);">APRS</div>
<div class="t" style="left:544.85px;top:353.00px;font-size:14px;color:#6d6d6d;transform:scaleX(0.8975);">12.5</div>
<div class="t" style="left:564.62px;top:386.00px;font-size:14px;color:#6d6d6d;transform:scaleX(0.8797);">None</div>
<div class="t" style="left:564.62px;top:420.00px;font-size:14px;color:#6d6d6d;transform:scaleX(0.8797);">None</div>
<div class="t" style="left:546.57px;top:451.00px;font-size:14px;color:#6d6d6d;transform:scaleX(0.9318);">Master</div>
<div class="t" style="left:546.61px;top:487.00px;font-size:14px;color:#6d6d6d;transform:scaleX(0.8950);">None</div>
<div class="t" style="left:786.25px;top:464.00px;font-size:14px;color:#000;transform:scaleX(0.9400);">TS1</div>
<div class="t" style="left:786.25px;top:494.00px;font-size:14px;color:#000;transform:scaleX(0.9400);">TS2</div>
<div class="t" style="left:757.00px;top:525.00px;font-size:14px;color:#000;transform:scaleX(0.9400);">Override</div>
</body></html>
